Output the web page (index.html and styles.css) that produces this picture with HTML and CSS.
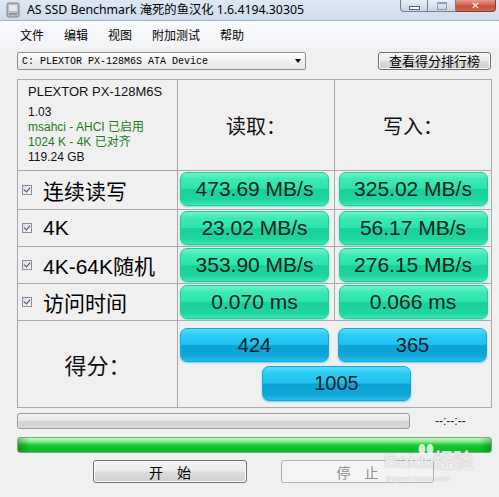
FILE: index.html
```html
<!DOCTYPE html>
<html lang="zh-CN">
<head>
<meta charset="utf-8">
<title>AS SSD Benchmark</title>
<link rel="stylesheet" href="styles.css">
</head>
<body>
<div class="window">
  <div class="titlebar">
    <svg class="app-icon" width="14" height="16" viewBox="0 0 14 16">
      <rect x="1" y="1" width="12" height="14" rx="1.5" fill="#b9bec4" stroke="#7d838a"/>
      <rect x="3" y="3" width="8" height="6" fill="#e4e7ea"/>
      <rect x="3" y="11" width="8" height="2" fill="#8d939a"/>
    </svg>
    <span class="title">AS SSD Benchmark 淹死的鱼汉化 1.6.4194.30305</span>
    <div class="winbtns">
      <span class="wb min"><span class="glyph-min"></span></span>
      <span class="wb max"><span class="glyph-max"></span></span>
      <span class="wb close">✕</span>
    </div>
  </div>
  <div class="menubar">
    <span>文件</span><span>编辑</span><span>视图</span><span>附加测试</span><span>帮助</span>
  </div>
  <div class="client">
    <div class="toolbar">
      <div class="combo"><span class="combo-text">C: PLEXTOR PX-128M6S ATA Device</span><span class="arrow"></span></div>
      <button class="btn rank">查看得分排行榜</button>
    </div>
    <div class="grid">
      <div class="cell info">
        <div class="model">PLEXTOR PX-128M6S</div>
        <div>1.03</div>
        <div class="ok">msahci - AHCI 已启用</div>
        <div class="ok">1024 K - 4K 已对齐</div>
        <div>119.24 GB</div>
      </div>
      <div class="cell head">读取：</div>
      <div class="cell head">写入：</div>

      <div class="cell label r1"><span class="cb"></span>连续读写</div>
      <div class="cell val c2 r1"><div class="bar green">473.69 MB/s</div></div>
      <div class="cell val r1"><div class="bar green">325.02 MB/s</div></div>

      <div class="cell label"><span class="cb"></span>4K</div>
      <div class="cell val c2"><div class="bar green">23.02 MB/s</div></div>
      <div class="cell val"><div class="bar green">56.17 MB/s</div></div>

      <div class="cell label"><span class="cb"></span>4K-64K随机</div>
      <div class="cell val c2"><div class="bar green">353.90 MB/s</div></div>
      <div class="cell val"><div class="bar green">276.15 MB/s</div></div>

      <div class="cell label"><span class="cb"></span>访问时间</div>
      <div class="cell val c2"><div class="bar green">0.070 ms</div></div>
      <div class="cell val"><div class="bar green">0.066 ms</div></div>

      <div class="cell score-label">得分：</div>
      <div class="cell scores">
        <div class="score-row">
          <div class="bar blue">424</div>
          <div class="bar blue">365</div>
        </div>
        <div class="bar blue total">1005</div>
      </div>
    </div>
    <div class="progress-row">
      <div class="prog gray"></div>
      <span class="time">--:--:--</span>
    </div>
    <div class="prog greenbar"></div>
    <div class="buttons">
      <button class="btn start">开　始</button>
      <button class="btn stop">停　止</button>
    </div>
  </div>
  <div class="watermark">
    <svg class="paw" width="18" height="12" viewBox="0 0 18 12">
      <ellipse cx="5" cy="6" rx="3.5" ry="5" fill="#ffffff" fill-opacity="0.8"/>
      <ellipse cx="13" cy="6" rx="3.5" ry="5" fill="#ffffff" fill-opacity="0.8"/>
    </svg>
    <span class="wm-main">Bai<span class="wm-du">du</span>经验</span>
    <span class="wm-sub">jingyan.baidu.com</span>
  </div>
</div>
</body>
</html>
```
FILE: styles.css
```css
* { box-sizing: border-box; }
html, body { margin: 0; padding: 0; }
body {
  width: 499px;
  height: 497px;
  overflow: hidden;
  background: #f0f0f0;
  font-family: "Liberation Sans", "Noto Sans CJK SC", sans-serif;
  color: #000;
}
.window {
  position: relative;
  width: 499px;
  height: 497px;
  overflow: hidden;
  display: flex;
  flex-direction: column;
  background: #f0f0f0;
}
.titlebar {
  height: 21px;
  display: flex;
  align-items: flex-start;
  background: linear-gradient(#dde8f4, #cfdcec);
  border-bottom: 1px solid #9fb2c8;
}
.app-icon { margin: 2px 0 0 6px; flex: none; }
.title {
  margin: 2px 0 0 7px;
  font-family: "Noto Sans", "Noto Sans CJK SC", sans-serif;
  font-size: 12.3px;
  line-height: 16px;
  color: #000;
  white-space: nowrap;
}
.winbtns {
  margin-left: auto;
  margin-right: 3px;
  display: flex;
  height: 12px;
}
.wb {
  height: 12px;
  display: flex;
  align-items: center;
  justify-content: center;
  border: 1px solid #6d7f97;
  border-top: none;
}
.min {
  width: 28px;
  border-radius: 0 0 0 4px;
  background: linear-gradient(#e8eff7, #c9d6e6);
}
.max {
  width: 28px;
  border-left: none;
  background: linear-gradient(#e8eff7, #c9d6e6);
}
.close {
  width: 40px;
  border-left: none;
  border-radius: 0 0 4px 0;
  border-color: #8a3b31;
  background: linear-gradient(#e59a8c, #c9503c 60%, #d16a55);
  color: #fff;
  font-size: 10px;
  font-weight: bold;
  line-height: 1;
  font-family: "DejaVu Sans", sans-serif;
}
.glyph-min {
  width: 11px;
  height: 4px;
  background: #fff;
  border: 1px solid #50627a;
  margin-top: 4px;
}
.glyph-max {
  width: 10px;
  height: 8px;
  border: 1px solid #50627a;
  border-top-width: 2px;
  background: transparent;
  opacity: 0.55;
}
.menubar {
  height: 27px;
  display: flex;
  align-items: center;
  gap: 20px;
  padding-left: 20px;
  background: linear-gradient(#f9fafc, #f2f4f7);
  font-family: "Noto Sans CJK SC", sans-serif;
  font-size: 12px;
  color: #000;
}
.client {
  flex: 1;
  padding: 4px 7px 0 17px;
  display: flex;
  flex-direction: column;
}
.toolbar {
  height: 18px;
  display: flex;
  align-items: stretch;
}
.combo {
  width: 289px;
  border: 1px solid #8f8f8f;
  border-radius: 2px;
  background: linear-gradient(#ffffff, #f1f1f1 50%, #e5e5e5);
  display: flex;
  align-items: center;
  padding-left: 4px;
}
.combo-text {
  font-family: "Liberation Mono", monospace;
  font-size: 10px;
  color: #000;
  white-space: nowrap;
}
.arrow {
  margin-left: auto;
  margin-right: 4px;
  width: 0;
  height: 0;
  border-left: 3.5px solid transparent;
  border-right: 3.5px solid transparent;
  border-top: 4px solid #000;
}
.btn {
  font-family: "Noto Sans CJK SC", sans-serif;
  border: 1px solid #707070;
  border-radius: 3px;
  background: linear-gradient(#f3f3f3, #ebebeb 48%, #dddddd 52%, #cfcfcf);
  box-shadow: inset 0 0 0 1px #fcfcfc;
  color: #000;
  padding: 0;
  margin: 0;
  cursor: default;
}
.rank {
  margin-left: auto;
  margin-right: 1px;
  width: 113px;
  font-size: 13px;
  line-height: 16px;
}
.grid {
  margin-top: 9px;
  width: 475px;
  display: grid;
  grid-template-columns: 159px 156px 156px;
  grid-template-rows: 90px 38px 36px 36px 36px 86px;
  gap: 1px;
  padding: 1px;
  background: #a9a9a9;
}
.cell {
  background: #f0f0f0;
  display: flex;
  align-items: center;
}
.info {
  flex-direction: column;
  align-items: flex-start;
  justify-content: flex-start;
  padding: 4px 0 0 10px;
  font-size: 12px;
  line-height: 15px;
  color: #111;
}
.info .model {
  font-size: 13px;
  margin-bottom: 6px;
}
.info .ok { color: #1f7a1f; }
.head {
  justify-content: center;
  font-family: "Noto Sans CJK SC", sans-serif;
  font-size: 20px;
  color: #111;
}
.label {
  padding-left: 4px;
  font-size: 21px;
  color: #000;
  white-space: nowrap;
}
.cb {
  width: 10px;
  height: 10px;
  margin-right: 11px;
  flex: none;
  border: 1px solid #8e8f8f;
  background: linear-gradient(135deg, #dcdcdc, #fafafa);
  position: relative;
}
.cb::after {
  content: "";
  position: absolute;
  left: 2px;
  top: 0px;
  width: 3px;
  height: 5px;
  border-right: 1.5px solid #3a4a8a;
  border-bottom: 1.5px solid #3a4a8a;
  transform: rotate(40deg);
}
.val {
  justify-content: center;
  align-items: flex-start;
  padding-top: 1px;
}
.val.c2 { padding-right: 3px; }
.bar {
  width: 149px;
  height: 34px;
  border-radius: 7px;
  display: flex;
  align-items: center;
  justify-content: center;
  font-family: "Liberation Sans", sans-serif;
  font-size: 21px;
  color: #10231c;
}
.green {
  border: 1px solid #22c99a;
  background: linear-gradient(#6ff2cc 0%, #3ce9b5 20%, #2ee3ad 48%, #19cf9a 52%, #1ed6a1 85%, #40e5b6 100%);
  box-shadow: 0 1px 2px rgba(60, 230, 180, 0.7);
}
.blue {
  border: 1px solid #12a8d8;
  background: linear-gradient(#55dcfb 0%, #2ccbf3 20%, #1ec3ef 48%, #0aa2d2 52%, #0fa8d9 85%, #29bdea 100%);
  box-shadow: 0 1px 2px rgba(60, 190, 235, 0.7);
  font-size: 20px;
  color: #0e1e2a;
}
.score-label {
  justify-content: center;
  font-family: "Noto Sans CJK SC", sans-serif;
  font-size: 22px;
  color: #111;
}
.scores {
  grid-column: span 2;
  flex-direction: column;
  align-items: flex-start;
  padding-top: 7px;
}
.score-row {
  display: flex;
  gap: 9px;
  padding-left: 2px;
}
.total {
  margin: 4px 0 0 84px;
  height: 35px;
}
.progress-row {
  margin-top: 5px;
  height: 16px;
  display: flex;
  align-items: center;
}
.prog {
  height: 16px;
  border-radius: 3px;
}
.gray {
  width: 393px;
  border: 1px solid #9a9a9a;
  background: linear-gradient(#f6f6f6, #e6e6e6 45%, #d2d2d2 55%, #d9d9d9);
}
.time {
  margin-left: 25px;
  font-size: 12px;
  color: #222;
}
.greenbar {
  margin-top: 8px;
  width: 475px;
  border: 1px solid #7aa97a;
  background:
    linear-gradient(90deg, rgba(0, 80, 0, 0.35), rgba(0, 0, 0, 0) 12px, rgba(0, 0, 0, 0) calc(100% - 12px), rgba(0, 80, 0, 0.3)),
    linear-gradient(#c9f7c9 0%, #8be98f 25%, #2ad246 45%, #12c42e 60%, #0fb82b 100%);
}
.buttons {
  margin-top: 7px;
  display: flex;
  gap: 34px;
  padding-left: 76px;
}
.start, .stop {
  width: 154px;
  height: 23px;
  font-size: 14px;
  line-height: 20px;
}
.stop {
  width: 153px;
  color: #8d8d8d;
  border-color: #adb2b5;
  background: #f4f4f4;
  box-shadow: none;
}
.watermark {
  position: absolute;
  left: 384px;
  top: 441px;
  width: 90px;
  height: 44px;
  pointer-events: none;
}
.paw {
  position: absolute;
  left: 33px;
  top: 2px;
}
.wm-main {
  position: absolute;
  left: 0;
  top: 9px;
  font-family: "Liberation Sans", "Noto Sans CJK SC", sans-serif;
  font-size: 20px;
  line-height: 22px;
  font-weight: bold;
  color: rgba(255, 255, 255, 0.8);
  text-shadow: 0 0 1px rgba(110, 110, 110, 0.6);
  white-space: nowrap;
  letter-spacing: -0.5px;
}
.wm-du {
  font-size: 17px;
}
.wm-sub {
  position: absolute;
  left: 2px;
  top: 33px;
  font-size: 8px;
  line-height: 9px;
  color: rgba(255, 255, 255, 0.75);
  text-shadow: 0 0 1px rgba(110, 110, 110, 0.5);
  white-space: nowrap;
}
```
